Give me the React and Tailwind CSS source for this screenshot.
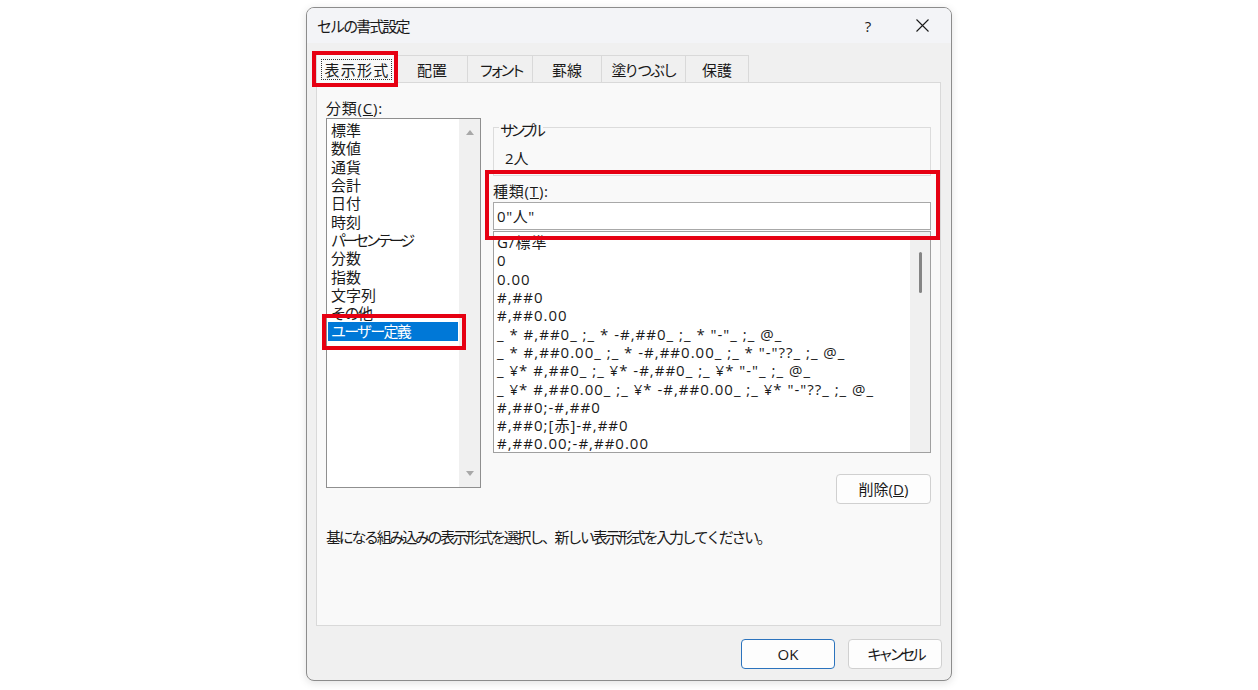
import React from "react";

const categories = [
  { label: "標準" },
  { label: "数値" },
  { label: "通貨" },
  { label: "会計" },
  { label: "日付" },
  { label: "時刻" },
  { label: "パーセンテージ", tr: "tracking-[-3.4px]" },
  { label: "分数" },
  { label: "指数" },
  { label: "文字列" },
  { label: "その他", tr: "tracking-[-1.5px]" },
  { label: "ユーザー定義", tr: "tracking-[-1.8px]", sel: true },
];

const formats = [
  "G/標準",
  "0",
  "0.00",
  "#,##0",
  "#,##0.00",
  '_ * #,##0_ ;_ * -#,##0_ ;_ * "-"_ ;_ @_',
  '_ * #,##0.00_ ;_ * -#,##0.00_ ;_ * "-"??_ ;_ @_',
  '_ ¥* #,##0_ ;_ ¥* -#,##0_ ;_ ¥* "-"_ ;_ @_',
  '_ ¥* #,##0.00_ ;_ ¥* -#,##0.00_ ;_ ¥* "-"??_ ;_ @_',
  "#,##0;-#,##0",
  "#,##0;[赤]-#,##0",
  "#,##0.00;-#,##0.00",
];

const tabs = [
  { label: "配置", w: "w-[71px]", tr: "" },
  { label: "フォント", w: "w-[65px]", tr: "tracking-[-4.5px]" },
  { label: "罫線", w: "w-[69px]", tr: "" },
  { label: "塗りつぶし", w: "w-[84px]", tr: "tracking-[-2.2px]" },
  { label: "保護", w: "w-[63px]", tr: "" },
];

function Arrow({ up }) {
  return (
    <svg width="8" height="5" viewBox="0 0 8 5">
      <polygon points={up ? "4,0 8,5 0,5" : "0,0 8,0 4,5"} fill="#a8a8a8" />
    </svg>
  );
}

export default function App() {
  return (
    <div className="min-h-screen bg-white pt-[7px] font-['Open_Sans','Noto_Sans_CJK_JP',sans-serif] text-[15px] text-[#1a1a1a]">
      <div className="mx-auto w-[646px] overflow-hidden rounded-[8px] border border-[#8c8c8c] bg-[#f0f0f0] shadow-[0_2px_8px_rgba(0,0,0,0.12)]">
        {/* title bar */}
        <div className="flex h-[35px] items-center bg-[#f3f4f7] pl-[10px]">
          <span className="leading-[18px] tracking-[-1.9px]">セルの書式設定</span>
          <div className="ml-auto mr-[2px] flex">
            <div className="flex w-[54px] justify-center leading-[18px]">?</div>
            <div className="flex w-[54px] items-center justify-center">
              <svg width="13" height="13" viewBox="0 0 13 13">
                <path d="M0.5 0.5 L12.5 12.5 M12.5 0.5 L0.5 12.5" stroke="#1a1a1a" strokeWidth="1.1" />
              </svg>
            </div>
          </div>
        </div>

        <div className="pl-[9px] pr-[10px]">
          {/* tabs */}
          <div className="mt-[9px] flex h-[30px] items-end">
            <div className="relative z-10 -mb-px flex h-[31px] w-[81px] justify-center border border-b-0 border-[#d9d9d9] bg-[#f9f9f9] pt-[6px]">
              <span className="flex h-[21px] items-center border border-dotted border-[#333] pl-[3px] pr-[2px] leading-[18px] tracking-[1.2px]">
                表示形式
              </span>
              <div className="pointer-events-none absolute -bottom-[4px] -left-[5px] -right-[2px] -top-[2px] border-4 border-[#e60012]" />
            </div>
            {tabs.map((t) => (
              <div
                key={t.label}
                className={`flex h-[27px] ${t.w} ${t.tr} items-center justify-center border-r border-t border-[#d9d9d9] bg-[#f0f0f0] pt-[2px] leading-[18px]`}
              >
                {t.label}
              </div>
            ))}
          </div>

          {/* panel */}
          <div className="h-[544px] border border-[#d9d9d9] bg-[#f9f9f9] pl-[9px] pr-[9px] pt-[16px]">
            <div className="flex gap-[12px]">
              {/* left column */}
              <div className="w-[155px]">
                <div className="leading-[18px] tracking-[0.8px]">
                  分類(<span className="underline">C</span>):
                </div>
                <div className="mt-[1px] flex h-[370px] border border-[#8f8f8f] bg-white">
                  <div className="flex-1 px-[1px] pt-[2px]">
                    {categories.map((c) => (
                      <div
                        key={c.label}
                        className={`relative flex h-[18.3px] items-center pl-[3px] leading-[18px] ${c.tr || ""} ${
                          c.sel ? "bg-[#0078d7] text-white" : ""
                        }`}
                      >
                        {c.label}
                        {c.sel && (
                          <div className="pointer-events-none absolute -bottom-[9px] -left-[6px] -right-[8px] -top-[8px] z-10 border-4 border-[#e60012]" />
                        )}
                      </div>
                    ))}
                  </div>
                  <div className="flex w-[21px] flex-col items-center justify-between bg-[#f0f0f0] pb-[11px] pt-[11px]">
                    <Arrow up />
                    <Arrow />
                  </div>
                </div>
              </div>

              {/* right column */}
              <div className="flex-1">
                <div className="relative mt-[28px] h-[49px] border border-[#dcdcdc] pl-[11px] pt-[21px]">
                  <span className="absolute -top-[7px] left-[5px] bg-[#f9f9f9] px-[1px] leading-[18px] tracking-[-4.5px]">
                    サンプル
                  </span>
                  <div className="leading-[18px]">2人</div>
                </div>

                <div className="relative mt-[5.5px]">
                  <div className="leading-[18px] tracking-[0.8px]">
                    種類(<span className="underline">T</span>):
                  </div>
                  <div className="mt-[2.5px] flex h-[28px] items-center border border-[#a8a8a8] bg-white pl-[3px] leading-[18px] tracking-[0.6px]">
                    0"人"
                  </div>
                  <div className="pointer-events-none absolute -bottom-[10px] -left-[8px] -right-[9px] -top-[11.5px] z-10 border-4 border-[#e60012]" />
                </div>

                <div className="mt-[1px] flex h-[222px] overflow-hidden border border-[#a0a0a0] bg-white">
                  <div className="flex-1 pl-[3px] pt-[1px] tracking-[1px]">
                    {formats.map((f) => (
                      <div key={f} className="flex h-[18.3px] items-center whitespace-pre leading-[18px]">
                        {f}
                      </div>
                    ))}
                  </div>
                  <div className="w-[20px] bg-[#f0f0f0] pt-[20px]">
                    <div className="mx-auto h-[41px] w-[3px] rounded-full bg-[#858585]" />
                  </div>
                </div>

                <div className="mt-[21px] flex justify-end">
                  <button className="flex h-[30px] w-[95px] items-center justify-center rounded-[4px] border border-[#d0d0d0] bg-[#fdfdfd] leading-[18px]">
                    削除(<span className="underline">D</span>)
                  </button>
                </div>
              </div>
            </div>

            <div className="mt-[23.5px] leading-[18px] tracking-[-2.3px]">
              基になる組み込みの表示形式を選択し、新しい表示形式を入力してください。
            </div>
          </div>
        </div>

        {/* footer */}
        <div className="flex justify-end gap-[13px] pb-[11px] pr-[9px] pt-[13px]">
          <button className="flex h-[30px] w-[94px] items-center justify-center rounded-[4px] border border-[#2b73bd] bg-[#fdfdfd] leading-[18px]">
            OK
          </button>
          <button className="flex h-[30px] w-[94px] items-center justify-center rounded-[4px] border border-[#d0d0d0] bg-[#fdfdfd] leading-[18px] tracking-[-3.8px]">
            キャンセル
          </button>
        </div>
      </div>
    </div>
  );
}
